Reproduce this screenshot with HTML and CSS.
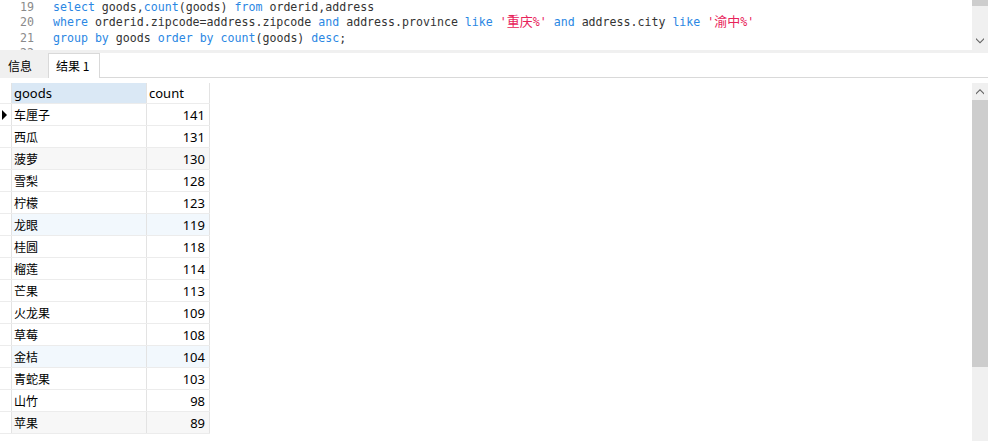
FILE: index.html
```html
<!DOCTYPE html>
<html>
<head>
<meta charset="utf-8">
<link rel="stylesheet" href="styles.css">
</head>
<body>
<div class="editor">
  <div class="gutter">
    <div class="ln">19</div>
    <div class="ln">20</div>
    <div class="ln">21</div>
    <div class="ln">22</div>
  </div>
  <div class="code">
    <div class="cl"><span class="kw">select</span> goods,<span class="kw">count</span>(goods) <span class="kw">from</span> orderid,address</div>
    <div class="cl"><span class="kw">where</span> orderid.zipcode=address.zipcode <span class="kw">and</span> address.province <span class="kw">like</span> <span class="str">'<span class="cjk">重庆</span>%'</span> <span class="kw">and</span> address.city <span class="kw">like</span> <span class="str">'<span class="cjk">渝中</span>%'</span></div>
    <div class="cl"><span class="kw">group</span> <span class="kw">by</span> goods <span class="kw">order</span> <span class="kw">by</span> <span class="kw">count</span>(goods) <span class="kw">desc</span>;</div>
    <div class="cl">&nbsp;</div>
  </div>
  <div class="vscroll top">
    <div class="thumb-top"></div>
    <div class="track-fill"></div>
    <svg class="arrow" width="16" height="12" viewBox="0 0 16 12"><path d="M4 4 L8 8 L12 4 L12 5.5 L8 9.5 L4 5.5 Z" fill="#606060"/></svg>
  </div>
</div>
<div class="sep"></div>
<div class="tabs">
  <div class="tab">信息</div>
  <div class="tab active">结果 1</div>
</div>
<div class="results">
  <div class="grid">
    <div class="row head">
      <div class="ind"></div>
      <div class="c1 sel">goods</div>
      <div class="c2 hl">count</div>
    </div>
    <div class="row"><div class="ind"><svg width="8" height="12" viewBox="0 0 8 12"><path d="M2 1 L7 6 L2 11 Z" fill="#000"/></svg></div><div class="c1">车厘子</div><div class="c2">141</div></div>
    <div class="row"><div class="ind"></div><div class="c1">西瓜</div><div class="c2">131</div></div>
    <div class="row gray"><div class="ind"></div><div class="c1">菠萝</div><div class="c2">130</div></div>
    <div class="row"><div class="ind"></div><div class="c1">雪梨</div><div class="c2">128</div></div>
    <div class="row"><div class="ind"></div><div class="c1">柠檬</div><div class="c2">123</div></div>
    <div class="row blue"><div class="ind"></div><div class="c1">龙眼</div><div class="c2">119</div></div>
    <div class="row"><div class="ind"></div><div class="c1">桂圆</div><div class="c2">118</div></div>
    <div class="row"><div class="ind"></div><div class="c1">榴莲</div><div class="c2">114</div></div>
    <div class="row"><div class="ind"></div><div class="c1">芒果</div><div class="c2">113</div></div>
    <div class="row"><div class="ind"></div><div class="c1">火龙果</div><div class="c2">109</div></div>
    <div class="row"><div class="ind"></div><div class="c1">草莓</div><div class="c2">108</div></div>
    <div class="row blue"><div class="ind"></div><div class="c1">金桔</div><div class="c2">104</div></div>
    <div class="row"><div class="ind"></div><div class="c1">青蛇果</div><div class="c2">103</div></div>
    <div class="row"><div class="ind"></div><div class="c1">山竹</div><div class="c2">98</div></div>
    <div class="row gray"><div class="ind"></div><div class="c1">苹果</div><div class="c2">89</div></div>
  </div>
  <div class="vscroll grid-scroll">
    <svg class="arrow" width="16" height="17" viewBox="0 0 16 17"><path d="M4 10 L8 6 L12 10 L12 11.5 L8 7.5 L4 11.5 Z" fill="#606060"/></svg>
    <div class="thumb"></div>
    <div class="track-fill"></div>
  </div>
</div>
</body>
</html>
```

FILE: styles.css
```css
html, body {
  margin: 0;
  padding: 0;
  background: #fff;
}
body {
  width: 988px;
  height: 441px;
  overflow: hidden;
  font-family: "Noto Sans", "Noto Sans CJK SC", sans-serif;
  font-size: 13px;
  color: #000;
}
.editor {
  height: 50px;
  display: flex;
  overflow: hidden;
}
.gutter {
  width: 34px;
  font-family: "DejaVu Sans Mono", monospace;
  font-size: 11.6px;
  line-height: 15.3px;
  color: #8a8a8a;
  text-align: right;
}
.code {
  flex: 1;
  padding-left: 19px;
  font-family: "DejaVu Sans Mono", "Noto Sans CJK SC", monospace;
  font-size: 11.6px;
  line-height: 15.3px;
  color: #333;
}
.cl {
  white-space: pre;
  height: 15.3px;
}
.kw { color: #2b87e3; }
.str { color: #e8225a; }
.cjk {
  font-family: "Noto Sans CJK SC", sans-serif;
  font-size: 13px;
  line-height: 10px;
}
.vscroll {
  width: 16px;
  background: #f0f0f0;
  display: flex;
  flex-direction: column;
}
.vscroll.top { height: 50px; }
.thumb-top {
  height: 6px;
  background: #cdcdcd;
}
.track-fill { flex: 1; }
.arrow { display: block; margin-bottom: 4px; }
.sep {
  height: 3px;
  background: #f0f0f0;
}
.tabs {
  height: 24px;
  display: flex;
  border-bottom: 1px solid #d9d9d9;
}
.tab {
  box-sizing: border-box;
  height: 25px;
  padding: 0 8px;
  line-height: 25px;
  background: #f0f0f0;
  font-family: "Noto Sans CJK SC", sans-serif;
  font-size: 12px;
  width: 48px;
  white-space: nowrap;
}
.tab.active {
  background: #fff;
  width: 52px;
  border: 1px solid #d9d9d9;
  border-bottom: none;
  padding: 0 0 0 7px;
  line-height: 23px;
}
.results {
  display: flex;
  height: 363px;
}
.grid {
  flex: 1;
  padding-top: 5px;
}
.row {
  display: flex;
  height: 22px;
  box-sizing: border-box;
  border-bottom: 1px solid #ececec;
  width: 210px;
  line-height: 22px;
}
.row.head {
  height: 21px;
  line-height: 20px;
}
.row.gray .c1, .row.gray .c2 { background: #f7f7f7; }
.row.blue .c1, .row.blue .c2 { background: #f2f8fd; }
.ind {
  width: 12px;
  box-sizing: border-box;
  border-right: 1px solid #e3e3e3;
  display: flex;
  align-items: center;
}
.ind svg { display: block; }
.c1 {
  width: 135px;
  box-sizing: border-box;
  border-right: 1px solid #e3e3e3;
  padding-left: 2px;
  padding-top: 1px;
  line-height: 21px;
  font-family: "Noto Sans", "Noto Sans CJK SC", sans-serif;
  font-size: 12px;
}
.head .c1 { font-size: 13px; padding-top: 0; line-height: 20px; }
.c2 {
  width: 63px;
  box-sizing: border-box;
  border-right: 1px solid #e3e3e3;
  text-align: right;
  padding-right: 4px;
}
.head .c1.sel { background: #dae8f5; }
.head .c2 { text-align: left; padding-left: 2px; }
.grid-scroll {
  margin-top: 5px;
}
.grid-scroll .arrow { margin: 0; }
.grid-scroll .thumb {
  height: 267px;
  background: #cdcdcd;
}
```
